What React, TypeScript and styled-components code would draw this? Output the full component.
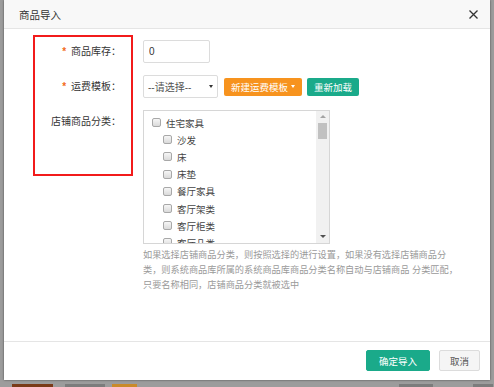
import React from "react";
import styled, { createGlobalStyle } from "styled-components";

const GlobalStyle = createGlobalStyle`
  html, body {
    margin: 0;
    padding: 0;
  }
  body {
    width: 494px;
    height: 387px;
    overflow: hidden;
    background: #9c9c9c;
    font-family: "Liberation Sans", "Noto Sans CJK SC", sans-serif;
  }
`;

// 목록 데이터 (레벨 0 = 상위 분류)
const categories = [
  { name: "住宅家具", level: 0 },
  { name: "沙发", level: 1 },
  { name: "床", level: 1 },
  { name: "床垫", level: 1 },
  { name: "餐厅家具", level: 1 },
  { name: "客厅架类", level: 1 },
  { name: "客厅柜类", level: 1 },
  { name: "客厅几类", level: 1 },
];

const App: React.FC = () => {
  return (
    <Page>
      <GlobalStyle />
      <Dialog>
        <Header>
          <Title>商品导入</Title>
          <CloseButton>
            <svg width="9" height="9" viewBox="0 0 9 9">
              <path d="M0.5 0.5 L8.5 8.5 M8.5 0.5 L0.5 8.5" stroke="#333" strokeWidth="1.3" />
            </svg>
          </CloseButton>
        </Header>
        <Body>
          <Annotation />
          <Row>
            <Label>
              <Required>*</Required> 商品库存：
            </Label>
            <NumberInput defaultValue="0" />
          </Row>
          <Row>
            <Label>
              <Required>*</Required> 运费模板：
            </Label>
            <Select>
              <span>--请选择--</span>
              <Caret $color="#333" />
            </Select>
            <ActionButton $bg="#f7931e">
              新建运费模板 <Caret $color="#fff" />
            </ActionButton>
            <ActionButton $bg="#1aaa8a">重新加载</ActionButton>
          </Row>
          <Row $top>
            <Label $top>店铺商品分类：</Label>
            <Column>
              <ListBox>
                <ListItems>
                  {categories.map((c) => (
                    <Item key={c.name} $level={c.level}>
                      <Check />
                      {c.name}
                    </Item>
                  ))}
                </ListItems>
                <ScrollTrack>
                  <Arrow $up />
                  <Thumb />
                  <TrackSpace />
                  <Arrow />
                </ScrollTrack>
              </ListBox>
              <Help>
                如果选择店铺商品分类，则按照选择的进行设置，如果没有选择店铺商品分
                <br />
                类，则系统商品库所属的系统商品库商品分类名称自动与店铺商品 分类匹配，
                <br />
                只要名称相同，店铺商品分类就被选中
              </Help>
            </Column>
          </Row>
        </Body>
        <Footer>
          <FooterButton $primary>确定导入</FooterButton>
          <FooterButton>取消</FooterButton>
        </Footer>
      </Dialog>
      <BottomStrip>
        <Block $w={41} $ml={8} $bg="#7a3a18" />
        <Block $w={40} $ml={12} $bg="#7c7c7c" />
        <Block $w={25} $ml={7} $bg="#c98a2a" />
        <Block $w={34} $ml={262} $bg="#7c7c7c" />
        <Block $w={20} $ml={40} $bg="#7c7c7c" />
      </BottomStrip>
    </Page>
  );
};

const Page = styled.div`
  display: flex;
  flex-direction: column;
  padding-left: 4px;
`;

const Dialog = styled.div`
  position: relative;
  width: 486px;
  height: 380px;
  background: #fff;
  display: flex;
  flex-direction: column;
  box-shadow: 0 0 2px rgba(0, 0, 0, 0.55);
  box-sizing: border-box;
`;

const Header = styled.div`
  height: 28px;
  flex: none;
  display: flex;
  align-items: center;
  justify-content: space-between;
  padding: 0 12px 0 15px;
  background: #f8f8f8;
  border-bottom: 1px solid #e5e5e5;
`;

const Title = styled.div`
  font-size: 10.5px;
  color: #333;
`;

const CloseButton = styled.div`
  display: flex;
  width: 9px;
  height: 9px;
`;

const Body = styled.div`
  position: relative;
  flex: 1;
  padding-top: 11px;
  display: flex;
  flex-direction: column;
  gap: 12px;
`;

// 빨간 주석 박스 (스크린샷 위에 겹쳐진 표시)
const Annotation = styled.div`
  position: absolute;
  left: 29px;
  top: 6px;
  width: 100px;
  height: 141px;
  border: 2px solid #f21b1b;
  box-sizing: border-box;
`;

const Row = styled.div<{ $top?: boolean }>`
  display: flex;
  align-items: ${(p) => (p.$top ? "flex-start" : "center")};
`;

const Label = styled.div<{ $top?: boolean }>`
  width: 117px;
  margin-right: 22px;
  flex: none;
  text-align: right;
  font-size: 10px;
  line-height: 14px;
  color: #333;
  padding-top: ${(p) => (p.$top ? "5px" : "0")};
`;

const Required = styled.span`
  color: #f26a1b;
  font-weight: bold;
  margin-right: 2px;
`;

const NumberInput = styled.input`
  width: 67px;
  height: 23px;
  box-sizing: border-box;
  border: 1px solid #dcdcdc;
  border-radius: 2px;
  padding: 0 5px;
  font-family: "Liberation Sans", sans-serif;
  font-size: 10px;
  color: #333;
  outline: none;
`;

const Select = styled.div`
  width: 75px;
  height: 23px;
  box-sizing: border-box;
  border: 1px solid #dcdcdc;
  border-radius: 2px;
  padding: 0 4px 0 4px;
  display: flex;
  align-items: center;
  justify-content: space-between;
  font-size: 10px;
  color: #555;
  margin-right: 6px;
`;

const Caret = styled.span<{ $color: string }>`
  display: inline-block;
  width: 0;
  height: 0;
  border-left: 2.5px solid transparent;
  border-right: 2.5px solid transparent;
  border-top: 3px solid ${(p) => p.$color};
  margin-left: 3px;
  vertical-align: middle;
`;

const ActionButton = styled.div<{ $bg: string }>`
  height: 18px;
  padding: 0 7px;
  margin-right: 5px;
  display: flex;
  align-items: center;
  background: ${(p) => p.$bg};
  color: #fff;
  font-size: 9.5px;
  border-radius: 2px;
  white-space: nowrap;
`;

const Column = styled.div`
  display: flex;
  flex-direction: column;
`;

const ListBox = styled.div`
  width: 187px;
  height: 134px;
  box-sizing: border-box;
  border: 1px solid #d6d6d6;
  display: flex;
  overflow: hidden;
`;

const ListItems = styled.div`
  flex: 1;
  padding: 3px 0 0 8px;
  overflow: hidden;
`;

const Item = styled.div<{ $level: number }>`
  height: 17.2px;
  display: flex;
  align-items: center;
  padding-left: ${(p) => p.$level * 11}px;
  font-size: 9.5px;
  color: #444;
  white-space: nowrap;
`;

const Check = styled.span`
  width: 9px;
  height: 9px;
  box-sizing: border-box;
  border: 1px solid #a8a8a8;
  border-radius: 2px;
  background: linear-gradient(#f6f6f6, #dadada);
  margin-right: 5px;
  flex: none;
`;

const ScrollTrack = styled.div`
  width: 13px;
  flex: none;
  background: #f1f1f1;
  display: flex;
  flex-direction: column;
  align-items: center;
`;

const Arrow = styled.span<{ $up?: boolean }>`
  width: 0;
  height: 0;
  margin: ${(p) => (p.$up ? "4px 0 0" : "0 0 5px")};
  border-left: 3px solid transparent;
  border-right: 3px solid transparent;
  ${(p) =>
    p.$up ? "border-bottom: 3px solid #a3a3a3;" : "border-top: 3px solid #505050;"}
`;

const Thumb = styled.span`
  width: 9px;
  height: 16px;
  margin-top: 5px;
  background: #c1c1c1;
`;

const TrackSpace = styled.span`
  flex: 1;
`;

const Help = styled.div`
  margin-top: 4px;
  font-size: 9.2px;
  line-height: 15px;
  color: #9a9a9a;
  white-space: nowrap;
`;

const Footer = styled.div`
  flex: none;
  border-top: 1px solid #e5e5e5;
  padding: 8px 10px 9px;
  display: flex;
  justify-content: flex-end;
  gap: 9px;
`;

const FooterButton = styled.div<{ $primary?: boolean }>`
  height: 21px;
  box-sizing: border-box;
  padding: 0 ${(p) => (p.$primary ? "12px" : "10px")};
  display: flex;
  align-items: center;
  font-size: 9.5px;
  border-radius: 2px;
  background: ${(p) => (p.$primary ? "#1aaa8a" : "#f5f5f5")};
  color: ${(p) => (p.$primary ? "#fff" : "#555")};
  border: 1px solid ${(p) => (p.$primary ? "#1aaa8a" : "#dcdcdc")};
`;

const BottomStrip = styled.div`
  height: 7px;
  display: flex;
  align-items: flex-end;
`;

const Block = styled.span<{ $w: number; $ml: number; $bg: string }>`
  width: ${(p) => p.$w}px;
  height: 3px;
  margin-left: ${(p) => p.$ml}px;
  background: ${(p) => p.$bg};
`;

export default App;
